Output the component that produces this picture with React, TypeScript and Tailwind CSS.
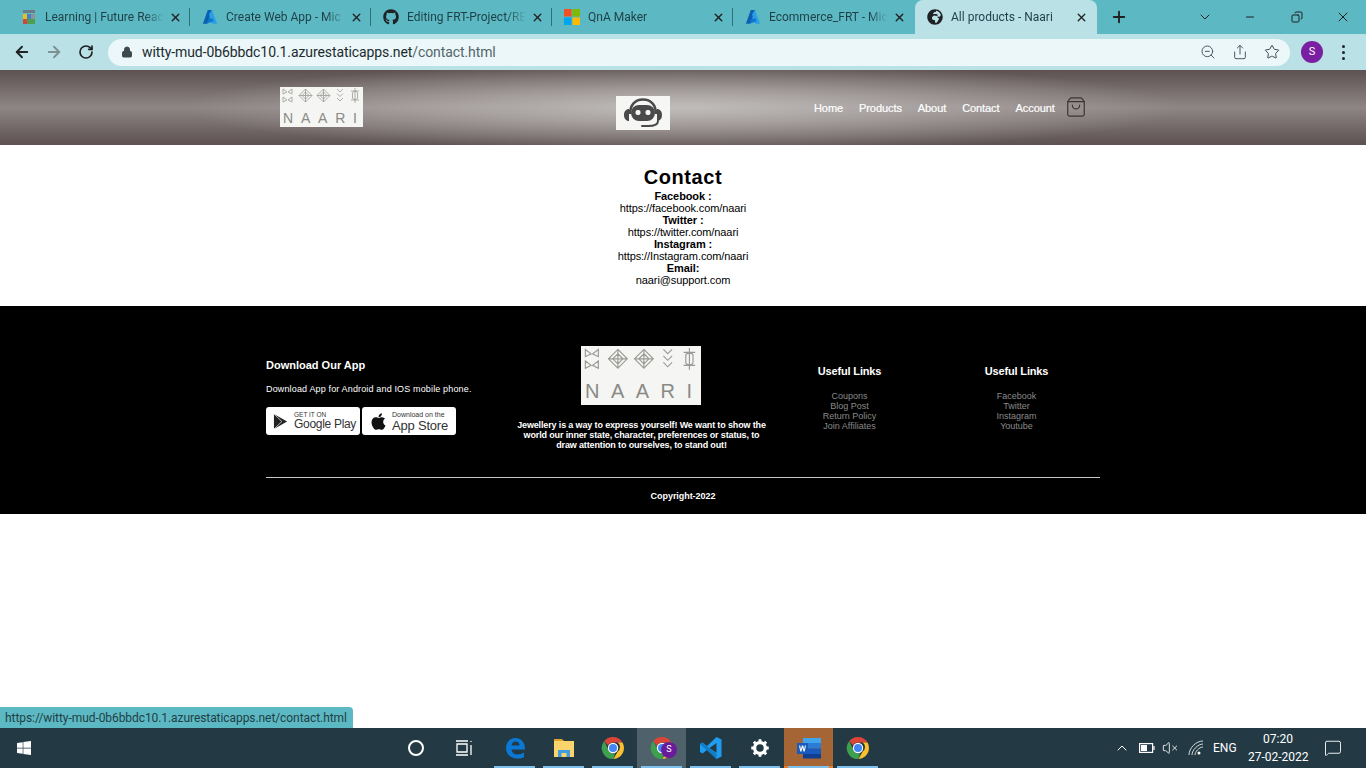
import { ArrowLeft, ArrowRight, RotateCw, Lock, ZoomOut, Share, Star, X, Plus, ChevronDown, ChevronUp, Minus, Copy, ShoppingBag, VolumeX, MessageSquare } from 'lucide-react';
import { FaGithub, FaGlobeAfrica, FaApple, FaWindows } from 'react-icons/fa';
import type { ReactNode } from 'react';

const ui = "font-['Roboto',sans-serif]";

function AzureIcon() {
  return (
    <svg viewBox="0 0 18 18" className="w-4 h-4">
      <path d="M6.5 1h5L6 16.5H1z" fill="#0a5fb4" />
      <path d="M11 1l6 15.5h-5.5L8 6z" fill="#2a9fe8" />
      <path d="M8 10.5l4 .2 1 3-8 2.8z" fill="#0c78d0" />
    </svg>
  );
}

function LearningIcon() {
  return (
    <svg viewBox="0 0 16 16" className="w-4 h-4">
      <rect x="2" y="1" width="12" height="3" fill="#6d7b84" />
      <rect x="2" y="5" width="4" height="5" fill="#e8c21c" />
      <rect x="6" y="5" width="4" height="5" fill="#3f7fd0" />
      <rect x="10" y="5" width="4" height="5" fill="#8a949a" />
      <rect x="2" y="10" width="4" height="5" fill="#d8443c" />
      <rect x="6" y="10" width="8" height="5" fill="#4c9f50" />
    </svg>
  );
}

function MsIcon() {
  return (
    <svg viewBox="0 0 16 16" className="w-4 h-4">
      <rect width="7.5" height="7.5" fill="#f25022" />
      <rect x="8.5" width="7.5" height="7.5" fill="#7fba00" />
      <rect y="8.5" width="7.5" height="7.5" fill="#00a4ef" />
      <rect x="8.5" y="8.5" width="7.5" height="7.5" fill="#ffb900" />
    </svg>
  );
}

function ChromeIcon() {
  return (
    <svg viewBox="0 0 24 24" className="w-6 h-6">
      <path d="M12 1a11 11 0 0 1 9.5 5.5H12a5.5 5.5 0 0 0-5 3L3.3 5A11 11 0 0 1 12 1z" fill="#db4437" />
      <path d="M21.5 6.5A11 11 0 0 1 12.5 23l4.2-7.5a5.5 5.5 0 0 0 0-9z" fill="#fbc02d" />
      <path d="M3.3 5L7.6 14.5A5.5 5.5 0 0 0 14 17.2L12.5 23A11 11 0 0 1 3.3 5z" fill="#3ea04f" />
      <circle cx="12" cy="12" r="5.2" fill="#fff" />
      <circle cx="12" cy="12" r="4" fill="#4285f4" />
    </svg>
  );
}

function EdgeIcon() {
  return (
    <svg viewBox="0 0 24 24" className="w-6 h-6">
      <path d="M3 12C3 6 7 2 12.5 2 18 2 22 6 22 13.5H8.5c.3 3 2.8 5 6 5 2.5 0 4.700-.7 6.500-2v4.500c-1.800 1-4.200 1.500-6.800 1.500C8 22.500 3 18.500 3 12zm5.500-2.500h8c0-2.500-1.500-4-3.800-4-2.200 0-3.800 1.500-4.200 4z" fill="#0a78d4" />
    </svg>
  );
}

function FolderIcon() {
  return (
    <svg viewBox="0 0 24 24" className="w-6 h-6">
      <path d="M2 3h8l2 2h-10z" fill="#e0a526" />
      <rect x="2" y="5" width="20" height="16" fill="#fbd56b" />
      <rect x="6" y="14" width="12" height="7" fill="#3f9ddf" />
      <rect x="9.500" y="17" width="5" height="4" fill="#fbd56b" />
    </svg>
  );
}

function VsCodeIcon() {
  return (
    <svg viewBox="0 0 24 24" className="w-6 h-6">
      <path d="M17.500 1L22.500 3.500V20.500L17.500 23 8 14l-4.500 3.500L1 16V8l2.500-1.500L8 10z" fill="#1f9cf0" />
      <path d="M17.500 7L10.500 12l7 5z" fill="#233a45" />
      <path d="M1 8l2.500-1.500 14 11.500v5z" fill="#0a71b8" opacity="0.7" />
    </svg>
  );
}

function GearIcon() {
  return (
    <svg viewBox="0 0 24 24" className="w-5 h-5">
      <circle cx="12" cy="12" r="6.500" fill="none" stroke="#fff" strokeWidth="4" />
      <path d="M12 1.500v5M12 17.500v5M1.500 12h5M17.500 12h5M4.600 4.600l3.500 3.500M15.900 15.900l3.500 3.500M19.400 4.600l-3.500 3.500M8.100 15.900l-3.500 3.500" stroke="#fff" strokeWidth="3.500" />
    </svg>
  );
}

function WordIcon() {
  return (
    <svg viewBox="0 0 26 24" className="w-[26px] h-6">
      <rect x="7" y="2" width="18" height="5" fill="#41a5ee" />
      <rect x="7" y="7" width="18" height="5.500" fill="#2b7cd3" />
      <rect x="7" y="12.500" width="18" height="5.500" fill="#185abd" />
      <rect x="7" y="18" width="18" height="4.500" fill="#103f91" />
      <rect x="1" y="7" width="11" height="11" fill="#185abd" />
      <path d="M3 9.500l1.300 6h1.200L6.500 11.500l1 4h1.200l1.300-6H8.900l-.7 3.800-1-3.800H5.900l-1 3.800-.7-3.800z" fill="#fff" />
    </svg>
  );
}

function BotIcon() {
  return (
    <svg viewBox="0 0 40 32" className="w-[40px] h-[32px]">
      <path d="M7 17C7 8 12 2.500 20 2.500S33 8 33 17" fill="none" stroke="#4a4a4a" strokeWidth="2.500" />
      <rect x="8" y="8" width="24" height="16" rx="8" fill="#4a4a4a" />
      <path d="M6 12v12C3 24 1 21.500 1 18s2-6 5-6zM34 12v12c3 0 5-2.500 5-6s-2-6-5-6z" fill="#4a4a4a" />
      <rect x="12.500" y="13" width="5" height="5" rx="2" fill="#f6f6f4" />
      <rect x="22.500" y="13" width="5" height="5" rx="2" fill="#f6f6f4" />
      <path d="M35 24c0 4-5 5-10 5h-6" fill="none" stroke="#4a4a4a" strokeWidth="2" strokeLinecap="round" />
    </svg>
  );
}

function Ornaments() {
  return (
    <svg viewBox="0 0 83 16" className="w-full block" fill="none" stroke="#9a9a96" strokeWidth="0.8">
      <path d="M3 1l4 3-4 2zM3 9l4 3-4 2zM12 1L8 4l4 2zM12 9l-4 3 4 2z" />
      <path d="M25.500 1l6.500 6.500-6.500 6.500-6.500-6.500zM25.500 4l3.500 3.500-3.500 3.500-3.500-3.500zM19 7.500h13M25.500 1v13" />
      <path d="M43.500 1l6.500 6.500-6.500 6.500-6.500-6.500zM43.500 4l3.500 3.500-3.500 3.500-3.500-3.500zM37 7.500h13M43.500 1v13" />
      <path d="M57 1l3 3 3-3M57 5.500l3 3 3-3M57 10l3 3 3-3" />
      <path d="M75 0v15M72.500 5c0-2 5-2 5 0v5c0 2-5 2-5 0zM71 3h8M71 12h8" />
    </svg>
  );
}

function Logo({ big }: { big?: boolean }) {
  return (
    <div className={big ? 'w-[120px] h-[59px] bg-[#f5f5f3] flex flex-col justify-between pt-[2px] pb-[3px]' : 'w-[83px] h-[40px] bg-[#f5f5f3] flex flex-col justify-between pt-[1px] pb-[1px]'}>
      <Ornaments />
      <div className={big ? "flex justify-between pl-1 pr-[9px] text-[#8a8a86] text-[20px] leading-[22px] font-['Liberation_Sans',sans-serif]" : "flex justify-between pl-[3px] pr-[6px] text-[#8a8a86] text-[14px] leading-[15px] font-['Liberation_Sans',sans-serif]"}>
        <span>N</span><span>A</span><span>A</span><span>R</span><span>I</span>
      </div>
    </div>
  );
}

function Tab({ icon, title, active, noSep }: { icon: ReactNode; title: string; active?: boolean; noSep?: boolean }) {
  return (
    <div className={active ? 'w-[182px] h-[34px] flex items-center pl-[12px] pr-[9px] bg-[#b9e1e6] rounded-t-[8px]' : 'w-[181px] h-[34px] flex items-center pl-[11px] pr-[9px] relative'}>
      <span className="w-4 h-4 shrink-0 flex items-center justify-center text-[#202124]">{icon}</span>
      <span className="ml-2 w-[119px] whitespace-nowrap text-[12px] text-[#1f3f47] [mask-image:linear-gradient(to_right,black_84%,transparent_100%)]">{title}</span>
      <X className="w-[13px] h-[13px] ml-auto shrink-0 text-[#202124]" strokeWidth={2.5} />
      {!active && !noSep && <span className="absolute right-[1px] top-[8px] h-[18px] w-px bg-[#2f6f78]" />}
    </div>
  );
}

function TaskItem({ children, line = true, cls = '' }: { children: ReactNode; line?: boolean; cls?: string }) {
  return (
    <div className={`w-[49px] h-10 flex items-center justify-center relative ${cls}`}>
      {children}
      {line && <span className="absolute bottom-0 left-[4px] right-[4px] h-[2px] bg-[#7cc0ee]" />}
    </div>
  );
}

export default function App() {
  return (
    <div className={`w-[1366px] h-[768px] overflow-hidden flex flex-col relative bg-white ${ui}`}>
      {/* Browser tabs */}
      <div className="h-[34px] bg-[#5cb8c2] flex items-center shrink-0 pl-[10px]">
        <Tab icon={<LearningIcon />} title="Learning | Future Reac" />
        <Tab icon={<AzureIcon />} title="Create Web App - Mic" />
        <Tab icon={<FaGithub className="w-4 h-4" />} title="Editing FRT-Project/RE" />
        <Tab icon={<MsIcon />} title="QnA Maker" />
        <Tab icon={<AzureIcon />} title="Ecommerce_FRT - Mic" noSep />
        <Tab icon={<FaGlobeAfrica className="w-4 h-4" />} title="All products - Naari" active />
        <Plus className="w-[18px] h-[18px] ml-[13px] text-[#202124]" strokeWidth={2.5} />
        <div className="flex-1" />
        <ChevronDown className="w-4 h-4 text-[#202124] mr-[31px]" strokeWidth={1.5} />
        <Minus className="w-3 h-3 text-[#202124] mr-[35px]" strokeWidth={2} />
        <Copy className="w-3 h-3 text-[#202124] mr-[32px] -scale-x-100" strokeWidth={2} />
        <X className="w-4 h-4 text-[#202124] mr-[15px]" strokeWidth={1.5} />
      </div>

      {/* Address bar */}
      <div className="h-[36px] bg-[#b9e1e6] flex items-center shrink-0 pl-[13px]">
        <ArrowLeft className="w-[18px] h-[18px] text-[#202124]" strokeWidth={2.5} />
        <ArrowRight className="w-[18px] h-[18px] ml-[14px] text-[#7d9094]" strokeWidth={2.5} />
        <RotateCw className="w-4 h-4 ml-[15px] text-[#202124]" strokeWidth={2.5} />
        <div className="ml-[14px] w-[1182px] h-[27px] rounded-full bg-[#ebf7f8] flex items-center pl-[13px] pr-[10px]">
          <Lock className="w-[12px] h-[12px] text-[#3c4a4e] fill-[#3c4a4e]" />
          <span className="ml-[9px] text-[14px] tracking-[-0.09px] text-[#1d2b2f]">witty-mud-0b6bbdc10.1.azurestaticapps.net<span className="text-[#53666b]">/contact.html</span></span>
          <div className="flex-1" />
          <ZoomOut className="w-4 h-4 text-[#4a5a5e]" strokeWidth={1.5} />
          <Share className="w-4 h-4 ml-4 text-[#4a5a5e]" strokeWidth={1.5} />
          <Star className="w-4 h-4 ml-4 text-[#3c4a4e]" strokeWidth={1.5} />
        </div>
        <div className="ml-[11px] w-[22px] h-[22px] rounded-full bg-[#7b1fa2] text-white text-[11px] flex items-center justify-center">S</div>
        <div className="ml-[19px] flex flex-col gap-[3px]">
          <span className="w-[3px] h-[3px] rounded-full bg-[#202124]" />
          <span className="w-[3px] h-[3px] rounded-full bg-[#202124]" />
          <span className="w-[3px] h-[3px] rounded-full bg-[#202124]" />
        </div>
      </div>

      {/* Site header */}
      <header className="h-[75px] shrink-0 flex items-center pl-[280px] bg-[linear-gradient(to_bottom,#5d5151_0%,#8e8585_50%,#5d5151_100%)] relative font-['Liberation_Sans',sans-serif]">
        <div className="absolute inset-0 bg-[radial-gradient(ellipse_500px_45px_at_50%_50%,rgba(200,198,195,0.85),rgba(200,198,195,0))]" />
        <div className="relative -mt-[1px]"><Logo /></div>
        <div className="relative ml-[253px] mt-[11px] w-[54px] h-[34px] bg-[#f6f6f4] flex items-center justify-center"><BotIcon /></div>
        <nav className="relative ml-[144px] mt-[1px] flex items-center gap-4 text-[11px] tracking-[-0.08px] text-white [-webkit-text-stroke:0.2px_white]">
          <span>Home</span>
          <span>Products</span>
          <span>About</span>
          <span>Contact</span>
          <span>Account</span>
          <ShoppingBag className="w-[22px] h-[22px] -ml-[6px] -mt-[3px] text-[#3b3535]" strokeWidth={1.3} />
        </nav>
      </header>

      {/* Contact */}
      <main className="h-[161px] shrink-0 pt-[21px] text-center text-black text-[11px] leading-[12px] tracking-[-0.1px] font-['Liberation_Sans',sans-serif]">
        <h1 className="text-[20px] leading-[23px] mb-[1px] font-bold tracking-[0.6px]">Contact</h1>
        <p className="font-bold">Facebook :</p>
        <p>https://facebook.com/naari</p>
        <p className="font-bold">Twitter :</p>
        <p>https://twitter.com/naari</p>
        <p className="font-bold">Instagram :</p>
        <p>https://Instagram.com/naari</p>
        <p className="font-bold">Email:</p>
        <p>naari@support.com</p>
      </main>

      {/* Footer */}
      <footer className="h-[208px] shrink-0 bg-black text-white px-[266px] font-['Liberation_Sans',sans-serif]">
        <div className="flex h-[172px] border-b border-[#c8c8c8]">
          <div className="w-[251px] pt-[53px]">
            <h3 className="text-[11px] leading-[13px] font-bold">Download Our App</h3>
            <p className="mt-[12px] text-[9px] leading-[11px] tracking-[0.15px]">Download App for Android and IOS mobile phone.</p>
            <div className="mt-[12px] flex gap-[2px]">
              <div className="w-[94px] h-[28px] bg-white rounded-[3px] flex items-center text-black pl-[7px]">
                <svg viewBox="0 0 16 18" className="w-[15px] h-[17px]"><path d="M1 1l14 8-14 8z" fill="#222" /><path d="M1 1l8.500 8L1 17" fill="none" stroke="#fff" strokeWidth="0.7" /></svg>
                <div className="ml-[6px] text-[#333]">
                  <div className="text-[6.5px] leading-[7px]">GET IT ON</div>
                  <div className="text-[12px] leading-[13px] tracking-[-0.3px]">Google Play</div>
                </div>
              </div>
              <div className="w-[94px] h-[28px] bg-white rounded-[3px] flex items-center text-black pl-[8px]">
                <FaApple className="w-[17px] h-[19px] text-[#111]" />
                <div className="ml-[5px] text-[#333]">
                  <div className="text-[7px] leading-[8px]">Download on the</div>
                  <div className="text-[13px] leading-[13px] tracking-[-0.2px]">App Store</div>
                </div>
              </div>
            </div>
          </div>
          <div className="w-[249px] pt-[40px] flex flex-col items-center">
            <div className="mr-[1px]"><Logo big /></div>
            <p className="mt-[15px] text-[9px] leading-[10px] font-bold text-center whitespace-nowrap tracking-[-0.14px]">
              Jewellery is a way to express yourself! We want to show the<br />
              world our inner state, character, preferences or status, to<br />
              draw attention to ourselves, to stand out!
            </p>
          </div>
          <div className="w-[167px] pt-[59px] text-center">
            <h3 className="text-[11px] leading-[13px] font-bold tracking-[-0.15px]">Useful Links</h3>
            <ul className="mt-[13px] text-[9px] leading-[10px] text-[#8a8a8a]">
              <li>Coupons</li>
              <li>Blog Post</li>
              <li>Return Policy</li>
              <li>Join Affiliates</li>
            </ul>
          </div>
          <div className="w-[167px] pt-[59px] text-center">
            <h3 className="text-[11px] leading-[13px] font-bold tracking-[-0.15px]">Useful Links</h3>
            <ul className="mt-[13px] text-[9px] leading-[10px] text-[#8a8a8a]">
              <li>Facebook</li>
              <li>Twitter</li>
              <li>Instagram</li>
              <li>Youtube</li>
            </ul>
          </div>
        </div>
        <p className="mt-[13px] text-[9px] leading-[11px] font-bold text-center tracking-[-0.05px]">Copyright-2022</p>
      </footer>

      <div className="flex-1" />

      {/* Link preview bubble */}
      <div className="absolute left-0 bottom-[40px] h-[21px] w-[353px] bg-[#5cb8c2] rounded-tr-[4px] flex items-center pl-[5px] text-[12px] tracking-[-0.07px] text-[#1f3f47] whitespace-nowrap">
        https://witty-mud-0b6bbdc10.1.azurestaticapps.net/contact.html
      </div>

      {/* Taskbar */}
      <div className="h-10 shrink-0 bg-[#233a45] flex items-center text-white">
        <FaWindows className="w-4 h-4 ml-4" />
        <div className="ml-[376px] w-4 h-4 rounded-full border-2 border-white" />
        <svg viewBox="0 0 18 16" className="w-[18px] h-4 ml-[31px]" fill="none" stroke="#fff" strokeWidth="1.300">
          <path d="M1 1h12M1 15h12M2 4h10v8H2zM16 1v1M16 5v10" />
        </svg>
        <div className="ml-[17px] flex">
          <TaskItem><EdgeIcon /></TaskItem>
          <TaskItem><FolderIcon /></TaskItem>
          <TaskItem><ChromeIcon /></TaskItem>
          <TaskItem cls="bg-[#4f626b]">
            <ChromeIcon />
            <span className="absolute left-[24px] top-[14px] w-4 h-4 rounded-full bg-[#6a1b9a] text-[9px] flex items-center justify-center">S</span>
          </TaskItem>
          <TaskItem><VsCodeIcon /></TaskItem>
          <TaskItem><GearIcon /></TaskItem>
          <TaskItem cls="bg-[#a56534]"><WordIcon /><span className="absolute bottom-0 left-0 right-0 h-[2px] bg-[#f07a1a]" /></TaskItem>
          <TaskItem><ChromeIcon /></TaskItem>
        </div>
        <div className="flex-1" />
        <ChevronUp className="w-4 h-4" strokeWidth={1.5} />
        <svg viewBox="0 0 16 10" className="w-4 h-[10px] ml-[9px]" fill="none" stroke="#fff" strokeWidth="1.200">
          <rect x="0.600" y="0.600" width="13" height="8.800" />
          <rect x="2" y="2" width="6" height="6" fill="#fff" stroke="none" />
          <path d="M15 3v4" />
        </svg>
        <VolumeX className="w-4 h-4 ml-[7px]" strokeWidth={1.3} />
        <svg viewBox="0 0 16 16" className="w-4 h-4 ml-[10px]" fill="none" stroke="#fff" strokeWidth="1">
          <path d="M1 15C1 8 8 1 15 1M4 15c0-5 6-11 11-11M7 15c0-3 4-8 8-8" opacity="0.8" />
          <circle cx="11" cy="13" r="1.500" fill="#fff" stroke="none" />
        </svg>
        <span className="ml-[9px] w-[28px] text-[12px]">ENG</span>
        <div className="ml-[7px] w-[60px] text-center text-[12px] leading-[18px] whitespace-nowrap">
          <div>07:20</div>
          <div>27-02-2022</div>
        </div>
        <MessageSquare className="w-[18px] h-[18px] ml-[16px] mr-[24px]" strokeWidth={1.2} />
      </div>
    </div>
  );
}
